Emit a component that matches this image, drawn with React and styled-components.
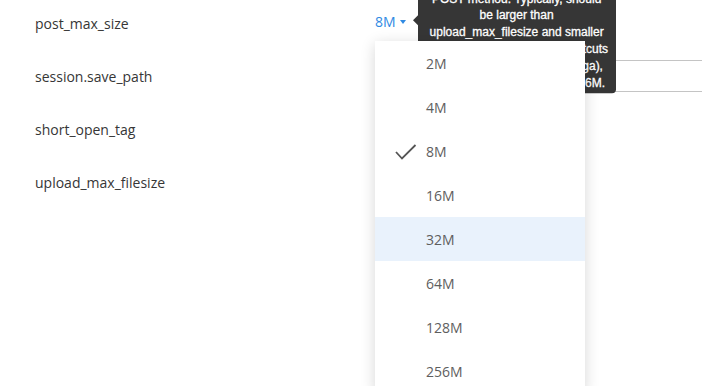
import React from "react";
import styled, { createGlobalStyle } from "styled-components";

const SIZES = ["2M", "4M", "8M", "16M", "32M", "64M", "128M", "256M"];

const HINT = [
  "Maximum size of POST data that",
  "PHP will accept. Applies to the",
  "POST method. Typically, should",
  "be larger than",
  "upload_max_filesize and smaller",
  "than memory_limit. Valid shortcuts",
  "are: K (kilo), G (giga), M (mega),",
  "for example 64M, 512M or 256M.",
];

const CheckIcon = () => (
  <svg width="22" height="16" viewBox="0 0 22 16">
    <polyline
      points="1,8 7,14.5 20.5,1"
      fill="none"
      stroke="#555"
      strokeWidth="1.8"
    />
  </svg>
);

const App = () => (
  <>
    <GlobalStyle />
    <Page>
      <SettingRow>
        <Label>post_max_size</Label>
        <ValueCell>
          <SelectToggle>
            8M
            <Caret />
            <Tooltip>
              {HINT.map(line => (
                <TipLine key={line}>{line}</TipLine>
              ))}
            </Tooltip>
          </SelectToggle>
          <Menu>
            {SIZES.map(size => (
              <MenuItem key={size} $active={size === "32M"}>
                <CheckSlot>{size === "8M" && <CheckIcon />}</CheckSlot>
                {size}
              </MenuItem>
            ))}
          </Menu>
        </ValueCell>
      </SettingRow>

      <SettingRow>
        <Label>session.save_path</Label>
        <ValueCell>
          <TextInput defaultValue="" />
        </ValueCell>
      </SettingRow>

      <SettingRow>
        <Label>short_open_tag</Label>
        <ValueCell />
      </SettingRow>

      <SettingRow>
        <Label>upload_max_filesize</Label>
        <ValueCell />
      </SettingRow>
    </Page>
  </>
);

const GlobalStyle = createGlobalStyle`
  html {
    overflow: hidden;
  }
  body {
    margin: 0;
    min-height: 386px;
    background: #fff;
    font-family: "Open Sans", "Noto Sans", sans-serif;
    font-size: 14px;
    color: #333;
  }
`;

const Page = styled.div`
  margin-top: -3px;
  padding-left: 35px;
  width: 702px;
  box-sizing: border-box;
`;

const SettingRow = styled.div`
  display: flex;
  align-items: center;
  height: 53px;
`;

const Label = styled.div`
  width: 340px;
  flex-shrink: 0;
  color: #363636;
  line-height: 20px;
`;

const ValueCell = styled.div`
  position: relative;
  flex: 1;
  display: flex;
  align-items: center;
  align-self: stretch;
`;

const SelectToggle = styled.span`
  position: relative;
  display: inline-flex;
  align-items: center;
  margin-top: -3px;
  color: #2f8ae3;
  line-height: 20px;
`;

const Caret = styled.span`
  margin-left: 4px;
  width: 0;
  height: 0;
  border-left: 3.5px solid transparent;
  border-right: 3.5px solid transparent;
  border-top: 4px solid #2f8ae3;
`;

const Tooltip = styled.div`
  position: absolute;
  left: calc(100% + 12px);
  top: 50%;
  transform: translateY(-50%);
  margin-top: 2px;
  z-index: 1;
  width: 198px;
  box-sizing: border-box;
  padding: 3px 8px 2px;
  border-radius: 4px;
  background: #363636;
  color: #fff;
  font-family: "Liberation Sans", Arial, sans-serif;
  font-size: 12px;
  line-height: 16.8px;
  text-align: center;
  white-space: nowrap;
  -webkit-text-stroke: 0.3px #fff;

  &::before {
    content: "";
    position: absolute;
    left: -5px;
    top: 50%;
    margin-top: -9px;
    border-top: 5px solid transparent;
    border-bottom: 5px solid transparent;
    border-right: 5px solid #363636;
  }
`;

const TipLine = styled.div``;

const Menu = styled.ul`
  position: absolute;
  top: 44px;
  left: 0;
  z-index: 2;
  width: 210px;
  margin: 0;
  padding: 0;
  list-style: none;
  background: #fff;
  box-shadow: 0 3px 14px rgba(0, 0, 0, 0.16);
`;

const MenuItem = styled.li`
  display: flex;
  align-items: center;
  height: 44px;
  padding-left: 20px;
  color: #5e5e5e;
  background: ${p => (p.$active ? "#e9f2fc" : "#fff")};
`;

const CheckSlot = styled.span`
  display: flex;
  align-items: center;
  width: 31px;
  margin-top: 1px;
`;

const TextInput = styled.input`
  width: 420px;
  height: 32px;
  box-sizing: border-box;
  margin-top: -1px;
  border: 1px solid #c4c4c4;
  border-radius: 2px;
  outline: none;
  font: inherit;
`;

export default App;
